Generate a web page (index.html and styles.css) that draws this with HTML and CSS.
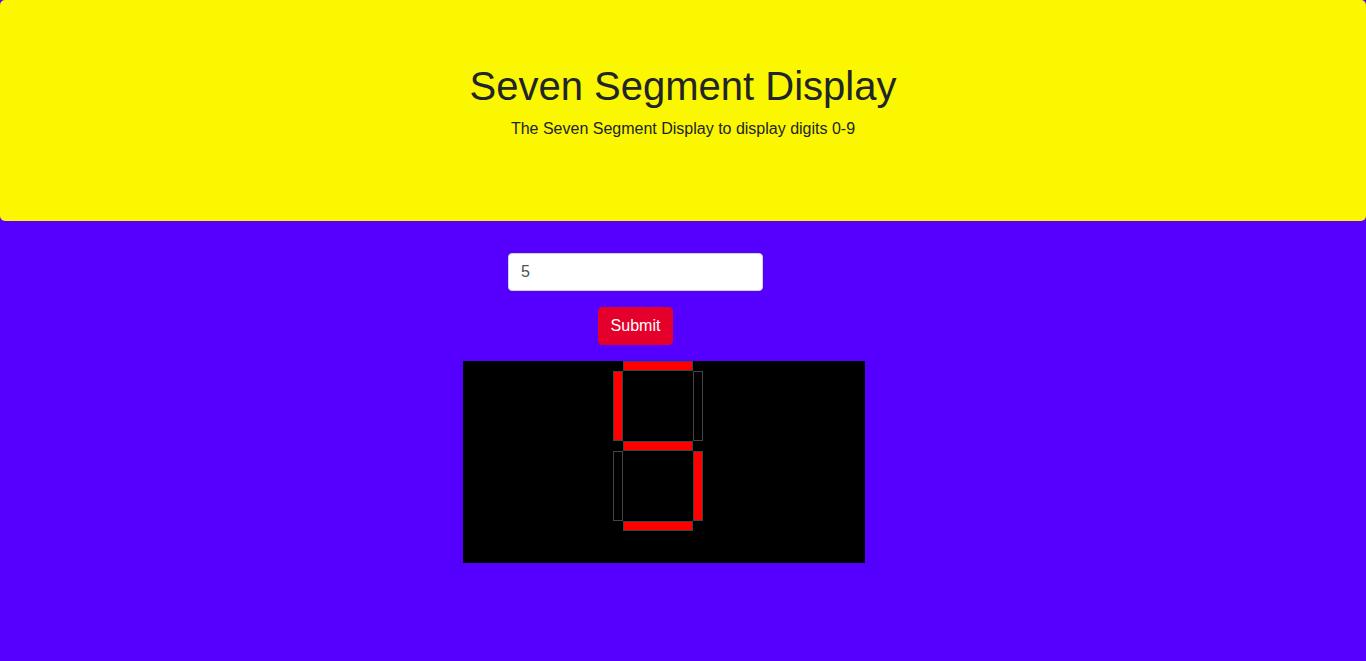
FILE: index.html
```html
<!DOCTYPE html>
<html lang="en">
<head>
<meta charset="utf-8">
<title>Seven Segment Display</title>
<link rel="stylesheet" href="styles.css">
</head>
<body>
<header class="jumbotron">
  <h1 class="title">Seven Segment Display</h1>
  <p class="subtitle">The Seven Segment Display to display digits 0-9</p>
</header>
<main class="main">
  <form class="digit-form">
    <input class="digit-input" type="text" value="5">
    <button class="submit-btn" type="button">Submit</button>
  </form>
  <div class="display">
    <div class="digit">
      <div class="seg seg-a on"></div>
      <div class="seg seg-f on"></div>
      <div class="seg seg-b"></div>
      <div class="seg seg-g on"></div>
      <div class="seg seg-e"></div>
      <div class="seg seg-c on"></div>
      <div class="seg seg-d on"></div>
    </div>
  </div>
</main>
</body>
</html>
```
FILE: styles.css
```css
* { box-sizing: border-box; }
html, body {
  margin: 0;
  padding: 0;
}
body {
  background: #5500ff;
  font-family: "Liberation Sans", Arial, sans-serif;
  color: #212529;
  height: 661px;
}
.jumbotron {
  background: #fbf700;
  border-radius: 5px;
  padding: 62px 32px 80px;
  text-align: center;
}
.title {
  margin: 0 0 7px;
  font-size: 40px;
  font-weight: 400;
  line-height: 48px;
}
.subtitle {
  margin: 0;
  font-size: 16px;
  line-height: 24px;
}
.main {
  margin-top: 32px;
  width: 402px;
  margin-left: calc(50% - 220px);
  display: flex;
  flex-direction: column;
  gap: 16px;
}
.digit-form {
  width: 255px;
  margin-left: 45px;
  display: flex;
  flex-direction: column;
  align-items: center;
  gap: 16px;
}
.digit-input {
  width: 255px;
  height: 38px;
  padding: 6px 12px;
  border: 1px solid #ced4da;
  border-radius: 4px;
  background: #fff;
  font-family: "Liberation Sans", Arial, sans-serif;
  font-size: 16px;
  color: #495057;
  outline: none;
}
.submit-btn {
  height: 38px;
  padding: 6px 12px;
  border: 1px solid #e4002b;
  border-radius: 4px;
  background: #e4002b;
  color: #fff;
  font-family: "Liberation Sans", Arial, sans-serif;
  font-size: 16px;
  line-height: 24px;
}
.display {
  width: 402px;
  height: 202px;
  background: #000;
  padding-left: 150px;
}
.digit {
  display: grid;
  grid-template-columns: 10px 70px 10px;
  grid-template-rows: 10px 70px 10px 70px 10px;
  width: 90px;
}
.seg {
  border: 1px solid #444;
  background: #000;
}
.seg.on { background: #ff0000; }
.seg-a { grid-column: 2; grid-row: 1; }
.seg-f { grid-column: 1; grid-row: 2; }
.seg-b { grid-column: 3; grid-row: 2; }
.seg-g { grid-column: 2; grid-row: 3; }
.seg-e { grid-column: 1; grid-row: 4; }
.seg-c { grid-column: 3; grid-row: 4; }
.seg-d { grid-column: 2; grid-row: 5; }
```
